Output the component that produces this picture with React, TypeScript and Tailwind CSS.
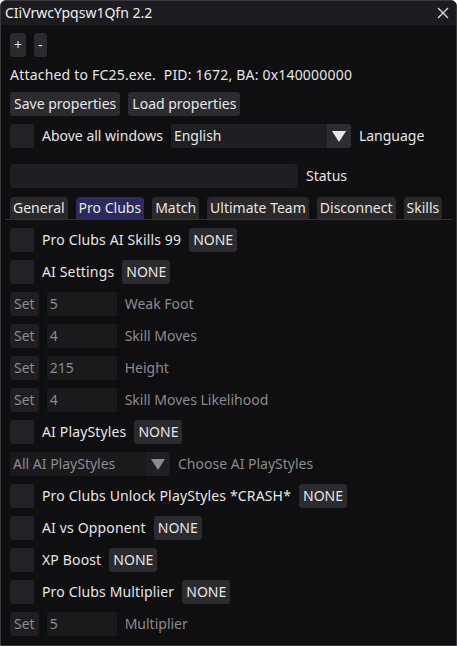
import React from "react";

const Btn = ({ children, dim }: { children: React.ReactNode; dim?: boolean }) => (
  <div
    className={
      "flex h-[24px] items-center whitespace-nowrap rounded-[3px] px-[4px] " +
      (dim ? "bg-[#1f1e22] text-[#8c8b8f]" : "bg-[#2b2a2f] text-[#e6e6e6]")
    }
  >
    {children}
  </div>
);

const Check = () => <div className="h-[24px] w-[24px] shrink-0 rounded-[3px] bg-[#222125]" />;

const Arrow = ({ dim }: { dim?: boolean }) => (
  <svg width="14" height="11" viewBox="0 0 14 11">
    <path d="M0 0 H14 L7 11 Z" fill={dim ? "#8c8b8f" : "#e8e8e8"} />
  </svg>
);

function CheckRow({ label }: { label: string }) {
  return (
    <div className="mt-[8px] flex h-[24px] items-center whitespace-nowrap">
      <Check />
      <span className="ml-[8px] tracking-[0.15px]">{label}</span>
      <div className="ml-[8px]">
        <Btn>NONE</Btn>
      </div>
    </div>
  );
}

function SetRow({ value, label }: { value: string; label: string }) {
  return (
    <div className="mt-[8px] flex h-[24px] items-center whitespace-nowrap text-[#8c8b8f]">
      <Btn dim>Set</Btn>
      <div className="ml-[8px] flex h-[24px] w-[70px] items-center rounded-[3px] bg-[#1a191c] px-[3px]">{value}</div>
      <span className="ml-[8px]">{label}</span>
    </div>
  );
}

const tabs = ["General", "Pro Clubs", "Match", "Ultimate Team", "Disconnect", "Skills"];

export default function App() {
  return (
    <div className="h-[646px] w-[457px] overflow-hidden rounded-t-[6px] border border-[#3a393d] bg-[#0f0e10] font-['Noto_Sans',sans-serif] text-[14px] leading-[20px] text-[#e6e6e6]">
      <div className="flex h-[24px] items-center justify-between bg-[#1c1b1f] pl-[4px] pr-[7px] text-[#f0f0f0]">
        <span>CIiVrwcYpqsw1Qfn 2.2</span>
        <svg width="12" height="12" viewBox="0 0 12 12">
          <path d="M1 1 L11 11 M11 1 L1 11" stroke="#dcdcdc" strokeWidth="1.3" />
        </svg>
      </div>
      <div className="flex flex-col px-[9px]">
        <div className="mt-[8px] flex gap-[8px]">
          <Btn>+</Btn>
          <Btn>-</Btn>
        </div>
        <div className="mt-[8px] flex h-[20px] items-center whitespace-nowrap tracking-[0.2px]">
          Attached to FC25.exe.&nbsp; PID: 1672, BA: 0x140000000
        </div>
        <div className="mt-[7px] flex gap-[8px]">
          <Btn>Save properties</Btn>
          <Btn>Load properties</Btn>
        </div>
        <div className="mt-[8px] flex h-[24px] items-center whitespace-nowrap">
          <Check />
          <span className="ml-[8px]">Above all windows</span>
          <div className="ml-[8px] flex h-[24px] w-[180px] items-center overflow-hidden rounded-[3px] bg-[#1f1e22]">
            <span className="flex-1 px-[3px]">English</span>
            <div className="flex h-full w-[24px] items-center justify-center bg-[#2e2c33]">
              <Arrow />
            </div>
          </div>
          <span className="ml-[8px]">Language</span>
        </div>
        <div className="mt-[16px] flex h-[24px] items-center">
          <div className="h-[24px] w-[288px] rounded-[3px] bg-[#1f1e22]" />
          <span className="ml-[8px]">Status</span>
        </div>
        <div className="-mx-[5px] mt-[9px] flex gap-[8px] border-b border-[#2e2c5e] px-[5px]">
          {tabs.map((t) => (
            <div
              key={t}
              className={
                "flex h-[22px] items-center whitespace-nowrap rounded-t-[4px] px-[3px] " +
                (t === "Pro Clubs" ? "bg-[#2b2a5c]" : "bg-[#2a2829]")
              }
            >
              {t}
            </div>
          ))}
        </div>
        <CheckRow label="Pro Clubs AI Skills 99" />
        <CheckRow label="AI Settings" />
        <SetRow value="5" label="Weak Foot" />
        <SetRow value="4" label="Skill Moves" />
        <SetRow value="215" label="Height" />
        <SetRow value="4" label="Skill Moves Likelihood" />
        <CheckRow label="AI PlayStyles" />
        <div className="mt-[8px] flex h-[24px] items-center whitespace-nowrap text-[#8c8b8f]">
          <div className="flex h-[24px] w-[160px] items-center overflow-hidden rounded-[3px] bg-[#1a191c]">
            <span className="flex-1 px-[3px]">All AI PlayStyles</span>
            <div className="flex h-full w-[24px] items-center justify-center bg-[#1f1e22]">
              <Arrow dim />
            </div>
          </div>
          <span className="ml-[8px]">Choose AI PlayStyles</span>
        </div>
        <CheckRow label="Pro Clubs Unlock PlayStyles *CRASH*" />
        <CheckRow label="AI vs Opponent" />
        <CheckRow label="XP Boost" />
        <CheckRow label="Pro Clubs Multiplier" />
        <SetRow value="5" label="Multiplier" />
      </div>
    </div>
  );
}
